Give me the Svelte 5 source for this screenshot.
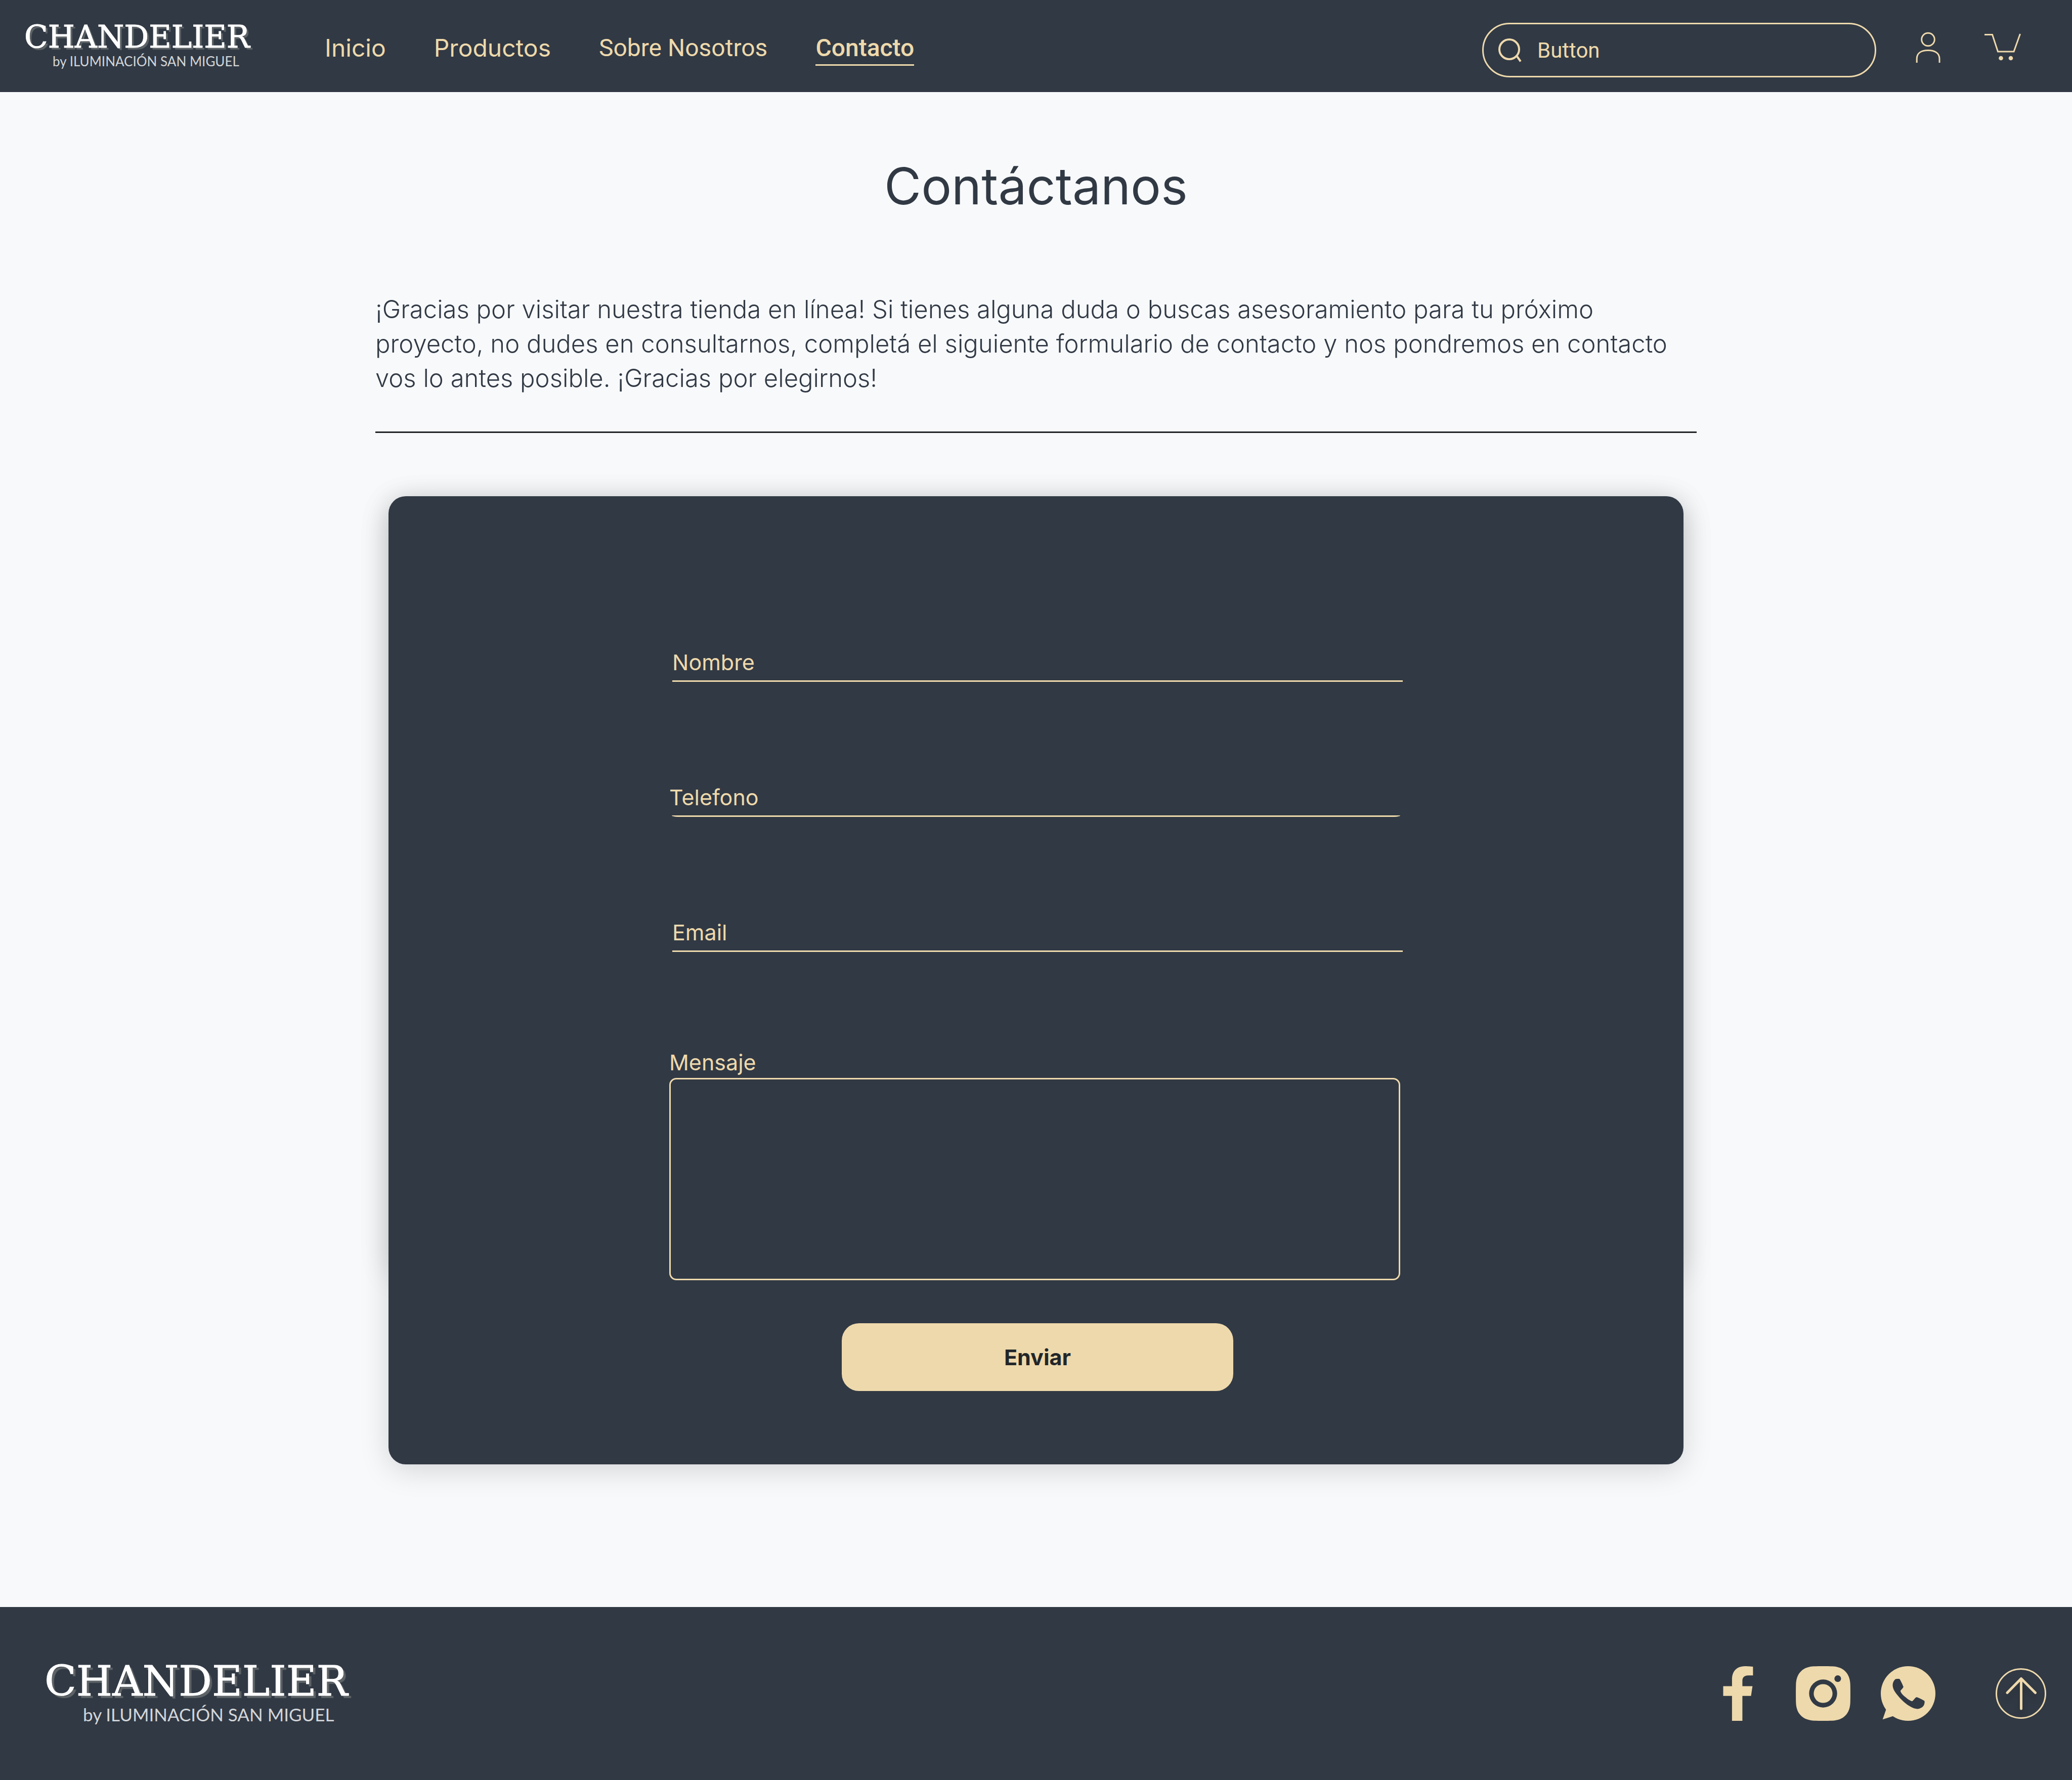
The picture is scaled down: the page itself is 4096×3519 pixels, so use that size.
<script>
  const links = [
    { label: 'Inicio', face: 'inter' },
    { label: 'Productos', face: 'inter' },
    { label: 'Sobre Nosotros', face: 'roboto' },
    { label: 'Contacto', face: 'roboto', current: true }
  ];

  const fields = [
    { id: 'nombre', label: 'Nombre', type: 'text', side: 'right' },
    { id: 'telefono', label: 'Telefono', type: 'tel', side: 'left' },
    { id: 'email', label: 'Email', type: 'email', side: 'right' }
  ];
</script>

{#snippet brand(size)}
  <a class="brand {size}" href="#inicio">
    <span class="name">CHANDELIER</span>
    <span class="byline">by ILUMINACIÓN SAN MIGUEL</span>
  </a>
{/snippet}

<div class="page">
  <header class="topbar">
    {@render brand('small')}
    <nav class="menu" aria-label="Principal">
      {#each links as link}
        <a
          class={link.face}
          class:current={link.current}
          href="#{link.label}"
          aria-current={link.current ? 'page' : undefined}>{link.label}</a>
      {/each}
    </nav>
    <div class="actions">
      <form class="search" role="search">
        <svg viewBox="0 0 48 48" aria-hidden="true">
          <circle cx="22.500" cy="22.500" r="19.500" />
          <path d="M38 36.500L45 46.500" />
        </svg>
        <input type="text" aria-label="Buscar" placeholder="Button" />
      </form>
      <a class="icon" href="#cuenta" aria-label="Mi cuenta">
        <svg width="65" height="108" viewBox="0 0 65 108" aria-hidden="true">
          <circle cx="30.500" cy="33" r="12.800" />
          <path d="M8.200 79V71C8.200 60 17 54.500 30.500 54.500C44 54.500 53 60 53 71V79" />
        </svg>
      </a>
      <a class="icon" href="#carrito" aria-label="Carrito">
        <svg width="82" height="108" viewBox="0 0 82 108" aria-hidden="true">
          <path d="M5 23.500H20.500L31.500 57H63L75.500 22" />
          <circle class="solid" cx="37.500" cy="70" r="4.300" />
          <circle class="solid" cx="57" cy="70" r="4.300" />
        </svg>
      </a>
    </div>
  </header>

  <main>
    <h1>Contáctanos</h1>
    <p class="intro">
      ¡Gracias por visitar nuestra tienda en línea! Si tienes alguna duda o buscas asesoramiento para tu próximo<br />
      proyecto, no dudes en consultarnos, completá el siguiente formulario de contacto y nos pondremos en contacto<br />
      vos lo antes posible. ¡Gracias por elegirnos!
    </p>
    <hr />
    <form class="card">
      {#each fields as field}
        <div class="field {field.side}">
          <label for={field.id}>{field.label}</label>
          <input id={field.id} name={field.id} type={field.type} />
        </div>
      {/each}
      <div class="message left">
        <label for="mensaje">Mensaje</label>
        <textarea id="mensaje" name="mensaje"></textarea>
      </div>
      <div class="submit right">
        <button type="submit">Enviar</button>
      </div>
    </form>
  </main>

  <footer class="bottom">
    {@render brand('large')}
    <div class="social">
      <a href="#facebook" aria-label="Facebook">
        <svg width="108" height="108" viewBox="-24.500 0 108 108" aria-hidden="true">
          <path d="M17.400 108V58.800H0V39.600H17.400V26C17.400 9 27.600 0 43 0C50 0 58.900 1 58.900 1V18.300H49.500C40.500 18.300 37.900 23.500 37.900 29V39.600H57.900L55 58.800H37.900V108Z" />
        </svg>
      </a>
      <a href="#instagram" aria-label="Instagram">
        <svg width="108" height="108" viewBox="0 0 108 108" aria-hidden="true">
          <path d="M36 .3C45 0 63 0 72 .3C94 1 107 14 107.700 36C108 45 108 63 107.700 72C107 94 94 107 72 107.700C63 108 45 108 36 107.700C14 107 1 94 .3 72C0 63 0 45 .3 36C1 14 14 1 36 .3Z" />
          <circle class="hole" cx="54" cy="54" r="27.700" />
          <circle cx="54" cy="54" r="18.600" />
          <circle class="hole" cx="82.900" cy="24.700" r="6.600" />
        </svg>
      </a>
      <a href="#whatsapp" aria-label="WhatsApp">
        <svg width="108" height="108" viewBox="0 0 108 108" aria-hidden="true">
          <circle cx="54" cy="54" r="54" />
          <path d="M10.500 85.600L3.700 105.300L24.200 98.800L30 70Z" />
          <path class="hole" d="M28.400 26C29.500 25 35 24.600 37 25.300C38.300 25.800 44.200 39 44.700 40.500C45 42.500 39.200 47.600 38.900 49C39.400 52.500 43 56.200 47.900 60.500C52 64 58 68.600 61.600 69.200C63.600 69.400 68.500 61.400 70.500 61.200C72.500 61 85 67.400 86.300 68.700C87.200 70.500 86.400 75.500 84.500 78.300C82 82 76 84.800 72 84.400C65 84 57 79.500 51 75C43 69 32.500 58 27 49C22.500 41 21.800 32.500 28.400 26Z" />
        </svg>
      </a>
    </div>
    <a class="to-top" href="#top" aria-label="Volver arriba">
      <svg width="100" height="100" viewBox="0 0 100 100" aria-hidden="true">
        <circle cx="50" cy="50" r="48.500" />
        <path d="M50.500 80V21M23 48.500L50.500 20.500L78.500 48.500" />
      </svg>
    </a>
  </footer>
</div>

<style>
  :global(body) {
    background: #f7f9fb;
  }

  .page {
    --dark: #313944;
    --cream: #eed9ac;
    --ink: #222629;
    display: flex;
    flex-direction: column;
    min-height: 100vh;
    color: var(--dark);
    background: #f7f9fb;
    font-family: Inter, 'Open Sans', sans-serif;
  }

  a {
    color: inherit;
    text-decoration: none;
  }

  svg {
    display: block;
  }

  /* Brand */
  .brand {
    display: flex;
    flex-direction: column;
    align-items: flex-start;
    color: #fff;
    white-space: nowrap;
  }

  .name {
    font-family: 'DejaVu Serif', serif;
    -webkit-text-stroke: 1px #fff;
  }

  .byline {
    color: #d3d6d9;
    font-family: Lato, sans-serif;
  }

  .small .name {
    font-size: 61px;
    line-height: 60px;
    text-shadow: 4px 4px 1px #5d6366;
  }

  .small .byline {
    padding-left: 56px;
    font-size: 26px;
    line-height: 36px;
  }

  .large .name {
    font-size: 82px;
    line-height: 82px;
    text-shadow: 5px 5px 1px #5d6366;
  }

  .large .byline {
    padding-left: 76px;
    font-size: 35px;
    line-height: 48px;
  }

  /* Header */
  .topbar {
    display: grid;
    grid-template-columns: 594px auto 1fr;
    align-items: center;
    min-height: 182px;
    padding: 0 96px 0 48px;
    box-sizing: border-box;
    color: var(--cream);
    background: var(--dark);
  }

  .menu {
    display: flex;
    gap: 95px;
    padding-top: 16px;
    font-size: 48px;
    line-height: 54px;
  }

  .menu a {
    padding-bottom: 5px;
    border-bottom: 3px solid transparent;
  }

  .menu .roboto {
    font-family: Roboto, sans-serif;
  }

  .menu .current {
    border-color: var(--cream);
    font-weight: 500;
  }

  .actions {
    display: flex;
    justify-content: flex-end;
    gap: 72px;
    padding-top: 16px;
  }

  .search {
    display: flex;
    align-items: center;
    gap: 30px;
    width: 779px;
    height: 108px;
    padding: 0 28px;
    box-sizing: border-box;
    border: 3px solid var(--cream);
    border-radius: 54px;
  }

  .search svg {
    flex: none;
    width: 48px;
    height: 48px;
    fill: none;
    stroke: var(--cream);
    stroke-width: 4;
  }

  .search input {
    flex: 1;
    min-width: 0;
    padding: 2px 0 0;
    border: 0;
    outline: 0;
    color: var(--cream);
    background: none;
    font-family: Roboto, sans-serif;
    font-size: 42px;
    line-height: 48px;
  }

  .search input::placeholder {
    color: var(--cream);
    opacity: 1;
  }

  .icon svg {
    fill: none;
    stroke: var(--cream);
    stroke-width: 3;
  }

  .icon .solid {
    fill: var(--cream);
    stroke: none;
  }

  /* Content */
  main {
    isolation: isolate;
    flex: 1;
    width: 2612px;
    max-width: 100%;
    margin: 0 auto;
    padding: 126px 0 282px;
    box-sizing: border-box;
  }

  h1 {
    margin: 0;
    font-size: 100px;
    font-weight: 400;
    line-height: 120px;
    text-align: center;
  }

  .intro {
    margin: 150px 0 71px;
    font-size: 49px;
    font-weight: 300;
    line-height: 68px;
  }

  hr {
    height: 3px;
    margin: 0 0 125px;
    border: 0;
    background: var(--ink);
  }

  .card {
    position: relative;
    display: flex;
    flex-direction: column;
    gap: 187px;
    margin: 0 26px;
    padding: 287px 555px 145px;
    border-radius: 34px;
    color: var(--cream);
    background: var(--dark);
    box-shadow: 0 11px 57px rgba(0, 0, 0, 0.15);
  }

  /* Second, shorter shadow that ends beside the message box */
  .card::before {
    content: '';
    position: absolute;
    z-index: -1;
    inset: 0 0 380px;
    border-radius: 34px;
    box-shadow: 0 11px 57px rgba(0, 0, 0, 0.15);
  }

  .field {
    display: grid;
  }

  .field label,
  .field input {
    grid-area: 1 / 1;
  }

  .right {
    padding-left: 6px;
  }

  .left {
    padding-right: 5px;
  }

  label {
    font-size: 43px;
  }

  .field label {
    align-self: end;
    padding-bottom: 15px;
    line-height: 48px;
  }

  .field input {
    justify-self: end;
    width: 100%;
    height: 80px;
    padding: 0;
    box-sizing: border-box;
    border: 0;
    border-bottom: 3px solid var(--cream);
    outline: 0;
    color: inherit;
    background: none;
    font: inherit;
  }

  .left input {
    width: calc(100% - 5px);
    border-radius: 0 0 12px 12px / 0 0 3px 3px;
  }

  .message {
    display: flex;
    flex-direction: column;
  }

  .message label {
    line-height: 62px;
  }

  textarea {
    height: 400px;
    padding: 24px;
    box-sizing: border-box;
    border: 3px solid var(--cream);
    border-radius: 14px;
    outline: 0;
    resize: none;
    color: inherit;
    background: none;
    font: inherit;
    font-size: 42px;
  }

  .submit {
    display: flex;
    justify-content: center;
    margin-top: -102px;
  }

  button {
    width: 774px;
    height: 134px;
    border: 0;
    border-radius: 34px;
    color: var(--ink);
    background: var(--cream);
    font-family: inherit;
    font-size: 43px;
    font-weight: 700;
  }

  /* Footer */
  .bottom {
    display: flex;
    align-items: center;
    min-height: 342px;
    padding: 0 51px 0 88px;
    box-sizing: border-box;
    background: var(--dark);
  }

  .social {
    display: flex;
    gap: 60px;
    margin-left: auto;
    margin-right: 119px;
    fill: var(--cream);
  }

  .hole {
    fill: var(--dark);
  }

  .to-top svg {
    fill: none;
    stroke: var(--cream);
    stroke-width: 3;
  }

  .to-top path {
    stroke-width: 5;
    stroke-linecap: round;
    stroke-linejoin: round;
    filter: drop-shadow(0 11px 6px rgba(0, 0, 0, 0.14));
  }
</style>
